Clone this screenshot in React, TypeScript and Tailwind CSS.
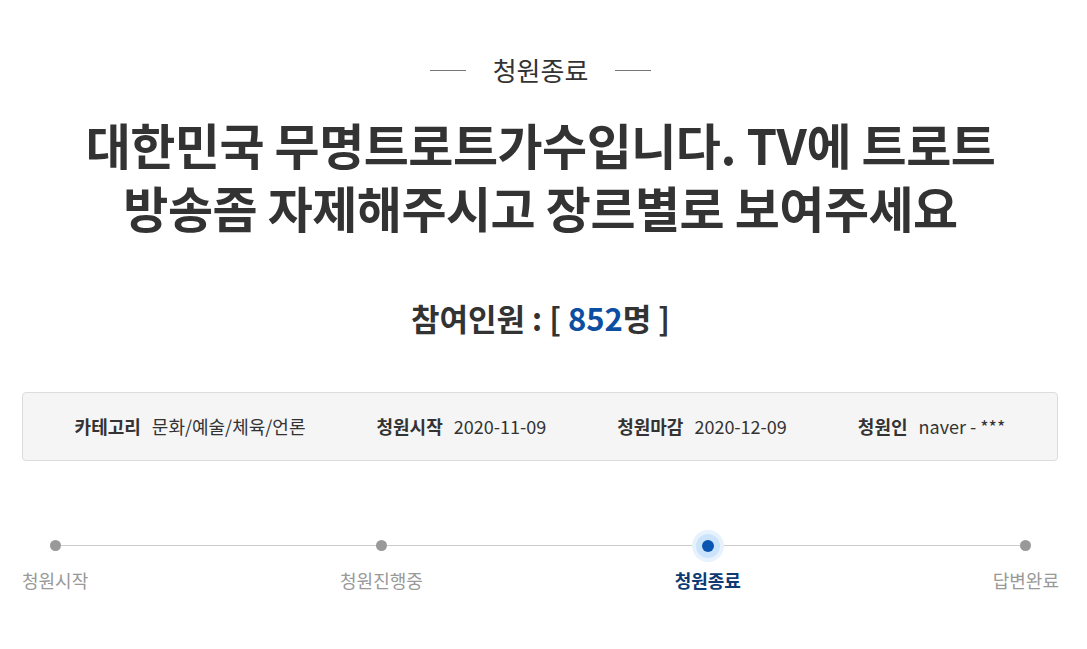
import React from 'react';

const font = { fontFamily: '"Noto Sans CJK KR", "Noto Sans", sans-serif' };

const info = [
  { label: '카테고리', value: '문화/예술/체육/언론' },
  { label: '청원시작', value: '2020-11-09' },
  { label: '청원마감', value: '2020-12-09' },
  { label: '청원인', value: 'naver - ***' },
];

const steps = [
  { name: '청원시작', active: false },
  { name: '청원진행중', active: false },
  { name: '청원종료', active: true },
  { name: '답변완료', active: false },
];

export default function App() {
  return (
    <div className="min-h-screen bg-white text-[#333]" style={font}>
      <div className="ml-[22px] w-[1037px] pt-[52px]">
        {/* status */}
        <div className="flex items-center justify-center gap-[27px]">
          <span className="h-px w-[36px] bg-[#777]"></span>
          <span className="text-[26px] leading-[36px] text-[#333]">청원종료</span>
          <span className="h-px w-[36px] bg-[#777]"></span>
        </div>

        <h1 className="mt-[24px] text-center text-[49px] font-bold leading-[63px] tracking-[-0.5px] text-[#333]">
          대한민국 무명트로트가수입니다. TV에 트로트
          <br />
          방송좀 자제해주시고 장르별로 보여주세요
        </h1>

        <div className="mt-[60px] text-center text-[31px] font-bold leading-[40px] text-[#333]">
          참여인원 : [ <span className="text-[#0b4ea2]">852</span>명 ]
        </div>

        {/* info box */}
        <div className="mt-[54px] flex h-[69px] w-[1036px] items-center justify-center gap-[71px] rounded-[4px] border border-[#dcdcdc] bg-[#f5f5f5] text-[18px]">
          {info.map((it) => (
            <div key={it.label} className="flex items-center gap-[11px]">
              <span className="font-bold text-[#333]">{it.label}</span>
              <span className="text-[#333]">{it.value}</span>
            </div>
          ))}
        </div>

        {/* progress */}
        <div className="relative mt-[74px]">
          <div className="absolute left-[33px] right-[34px] top-[10px] h-px bg-[#cccccc]"></div>
          <div className="relative flex justify-between">
            {steps.map((s) => (
              <div key={s.name} className="flex flex-col items-center">
                <div className="flex h-[21px] w-[32px] items-center justify-center">
                  {s.active ? (
                    <div className="flex h-[32px] w-[32px] items-center justify-center rounded-full bg-[#e7f2fd]">
                      <div className="flex h-[24px] w-[24px] items-center justify-center rounded-full bg-[#cbe4fb]">
                        <div className="h-[12px] w-[12px] rounded-full bg-[#0a55b2]"></div>
                      </div>
                    </div>
                  ) : (
                    <div className="h-[11px] w-[11px] rounded-full bg-[#999]"></div>
                  )}
                </div>
                <span
                  className={
                    s.active
                      ? 'mt-[11px] text-[18px] font-bold leading-[26px] text-[#0d3a73]'
                      : 'mt-[11px] text-[18px] leading-[26px] text-[#999]'
                  }
                >
                  {s.name}
                </span>
              </div>
            ))}
          </div>
        </div>
      </div>
    </div>
  );
}
